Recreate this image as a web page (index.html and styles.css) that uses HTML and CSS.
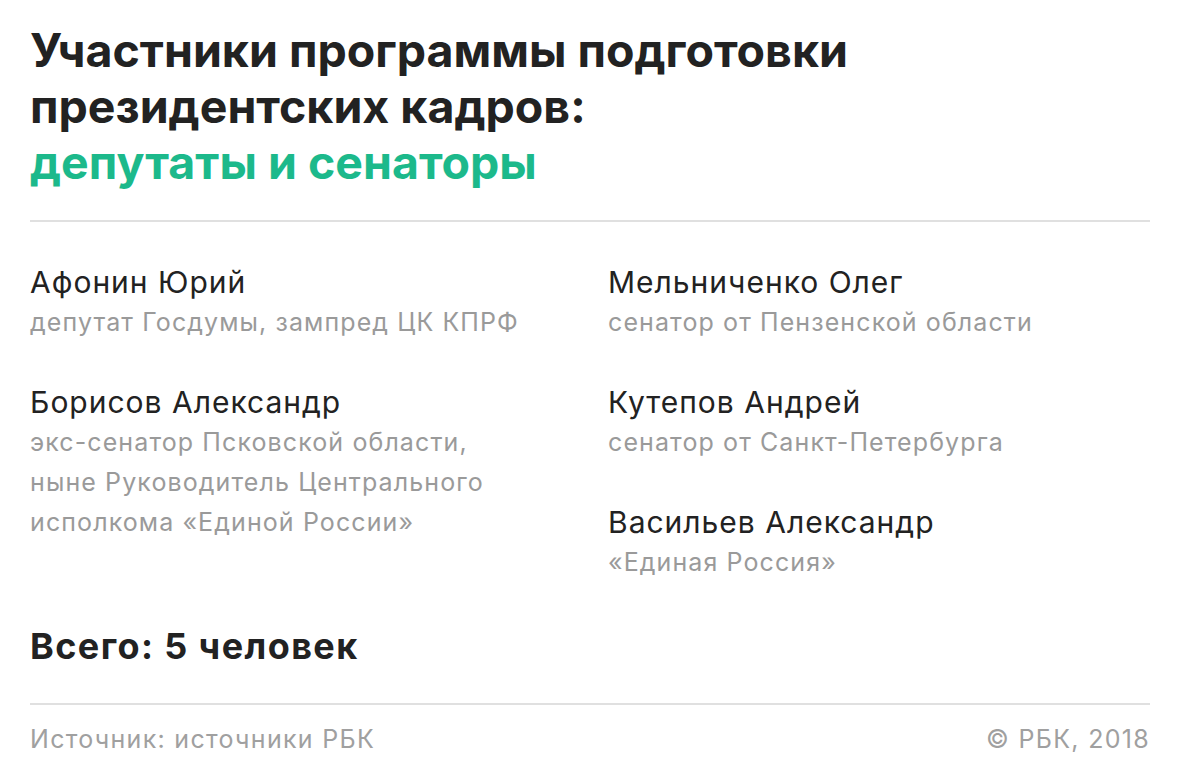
FILE: index.html
```html
<!DOCTYPE html>
<html lang="ru">
<head>
<meta charset="utf-8">
<link rel="stylesheet" href="styles.css">
</head>
<body>
<div class="card">
  <h1 class="title">Участники программы подготовки<br>президентских кадров:<br><span class="accent">депутаты и сенаторы</span></h1>
  <hr class="rule">
  <div class="grid">
    <div class="col">
      <div class="person"><div class="name">Афонин Юрий</div><div class="role">депутат Госдумы, зампред ЦК КПРФ</div></div>
      <div class="person"><div class="name">Борисов Александр</div><div class="role">экс-сенатор Псковской области,<br>ныне Руководитель Центрального<br>исполкома «Единой России»</div></div>
    </div>
    <div class="col">
      <div class="person"><div class="name">Мельниченко Олег</div><div class="role">сенатор от Пензенской области</div></div>
      <div class="person"><div class="name">Кутепов Андрей</div><div class="role">сенатор от Санкт-Петербурга</div></div>
      <div class="person"><div class="name">Васильев Александр</div><div class="role">«Единая Россия»</div></div>
    </div>
  </div>
  <div class="total">Всего: 5 человек</div>
  <hr class="rule rule-bottom">
  <div class="footer"><span>Источник: источники РБК</span><span>© РБК, 2018</span></div>
</div>
</body>
</html>
```
FILE: styles.css
```css
html, body { margin: 0; padding: 0; background: #fff; }
body { font-family: Inter, "Liberation Sans", sans-serif; color: #222; }
.card { padding: 22px 30px 0 30px; }
.title { margin: 0; font-size: 46.5px; line-height: 56px; font-weight: 700; color: #222; }
.accent { color: #1cb98b; }
.rule { border: 0; height: 2px; background: #e0e0e0; margin: 0; margin-top: 30px; }
.grid { display: grid; grid-template-columns: 578px 1fr; margin-top: 40px; }
.col { display: flex; flex-direction: column; gap: 40px; }
.name { font-size: 30px; line-height: 40px; letter-spacing: 1px; color: #222; }
.role { font-size: 25px; line-height: 40px; letter-spacing: 1.1px; color: #9a9a9a; }
.total { font-size: 36px; font-weight: 700; line-height: 40px; letter-spacing: 1.4px; margin-top: 44px; color: #222; }
.rule-bottom { margin-top: 37px; }
.footer { display: flex; justify-content: space-between; font-size: 25px; line-height: 40px; letter-spacing: 1.3px; color: #a0a0a0; margin-top: 14px; }
```
